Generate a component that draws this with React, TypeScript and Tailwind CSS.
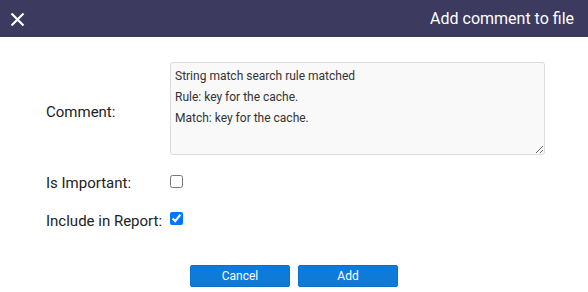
export default function App() {
  return (
    <div className="w-[588px] h-[292px] bg-white font-['Roboto',sans-serif] text-[#222]">
      {/* title bar */}
      <div className="h-[37px] bg-[#3c3a5e] flex items-center justify-between pl-[10px] pr-[14px] text-white">
        <svg width="15" height="15" viewBox="0 0 15 15" className="mt-[2px]">
          <path d="M1.5 1.5 L13.5 13.5 M13.5 1.5 L1.5 13.5" stroke="white" strokeWidth="2.2" />
        </svg>
        <span className="text-[16px] leading-[20px] mt-[1px]">Add comment to file</span>
      </div>

      <div className="pl-[46px] pt-[25px]">
        <div className="flex">
          <label className="w-[124px] self-center pt-[6px] text-[15px] leading-[20px]">Comment:</label>
          <textarea
            className="block w-[375px] h-[93px] bg-[#f9f9f9] border border-[#dcdcdc] rounded-[3px] pl-[4px] pt-[3px] text-[12px] leading-[21px] text-[#333] outline-none"
            defaultValue={"String match search rule matched\nRule: key for the cache.\nMatch: key for the cache."}
          />
        </div>

        <div className="flex items-start mt-[18px]">
          <label className="w-[124px] text-[15px] leading-[20px]">Is Important:</label>
          <input type="checkbox" className="mt-[2px] w-[13px] h-[13px]" />
        </div>

        <div className="flex items-start mt-[18px]">
          <label className="w-[124px] text-[15px] leading-[20px]">Include in Report:</label>
          <input type="checkbox" defaultChecked className="mt-[1px] w-[13px] h-[13px]" />
        </div>
      </div>

      <div className="flex justify-center gap-[8px] mt-[34px]">
        <button className="w-[100px] h-[22px] bg-[#0e7bdb] border border-[#0b70c8] rounded-[2px] text-white text-[12px] leading-[20px]">
          Cancel
        </button>
        <button className="w-[100px] h-[22px] bg-[#0e7bdb] border border-[#0b70c8] rounded-[2px] text-white text-[12px] leading-[20px]">
          Add
        </button>
      </div>
    </div>
  );
}
